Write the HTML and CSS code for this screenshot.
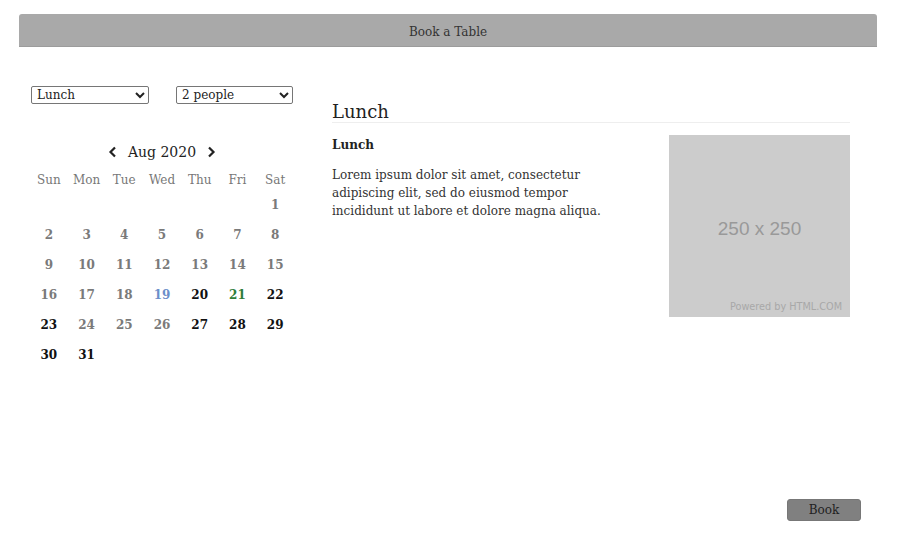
FILE: index.html
```html
<!DOCTYPE html>
<html>
<head>
<meta charset="utf-8">
<link rel="stylesheet" href="styles.css">
</head>
<body>
<div class="page">
  <div class="topbar">Book a Table</div>
  <div class="main">
    <div class="left">
      <div class="selects">
        <select class="sel sel-meal"><option>Lunch</option><option>Dinner</option></select>
        <select class="sel sel-people"><option>2 people</option><option>3 people</option></select>
      </div>
      <div class="calendar">
        <div class="cal-title">
          <span class="arrow"><svg width="10" height="12" viewBox="0 0 10 12"><path d="M7 1.5 L2.5 6 L7 10.5" fill="none" stroke="#222" stroke-width="2.2"/></svg></span>
          <span class="month">Aug 2020</span>
          <span class="arrow"><svg width="10" height="12" viewBox="0 0 10 12"><path d="M3 1.5 L7.5 6 L3 10.5" fill="none" stroke="#222" stroke-width="2.2"/></svg></span>
        </div>
        <div class="weekdays">
          <span>Sun</span><span>Mon</span><span>Tue</span><span>Wed</span><span>Thu</span><span>Fri</span><span>Sat</span>
        </div>
        <div class="days">
          <span></span><span></span><span></span><span></span><span></span><span></span><span class="past">1</span>
          <span class="past">2</span><span class="past">3</span><span class="past">4</span><span class="past">5</span><span class="past">6</span><span class="past">7</span><span class="past">8</span>
          <span class="past">9</span><span class="past">10</span><span class="past">11</span><span class="past">12</span><span class="past">13</span><span class="past">14</span><span class="past">15</span>
          <span class="past">16</span><span class="past">17</span><span class="past">18</span><span class="today">19</span><span class="open">20</span><span class="selected">21</span><span class="open">22</span>
          <span class="open">23</span><span class="past">24</span><span class="past">25</span><span class="past">26</span><span class="open">27</span><span class="open">28</span><span class="open">29</span>
          <span class="open">30</span><span class="open">31</span>
        </div>
      </div>
    </div>
    <div class="right">
      <h2 class="heading">Lunch</h2>
      <div class="detail">
        <div class="text">
          <div class="subhead">Lunch</div>
          <p class="desc">Lorem ipsum dolor sit amet, consectetur adipiscing elit, sed do eiusmod tempor incididunt ut labore et dolore magna aliqua.</p>
        </div>
        <div class="placeholder">
          <span class="ph-size">250 x 250</span>
          <span class="ph-credit">Powered by HTML.COM</span>
        </div>
      </div>
    </div>
  </div>
  <div class="footer">
    <button class="book">Book</button>
  </div>
</div>
</body>
</html>
```

FILE: styles.css
```css
* { box-sizing: border-box; }
body {
  margin: 0;
  background: #fff;
  font-family: "DejaVu Serif", "Liberation Serif", serif;
  color: #333;
}
.page {
  padding: 14px 23px 0 19px;
}
.topbar {
  height: 33px;
  background: #a9a9a9;
  border-radius: 3px 3px 0 0;
  border-bottom: 1px solid #9c9c9c;
  text-align: center;
  padding-top: 3px;
  line-height: 30px;
  font-size: 12px;
  color: #333;
}
.main {
  display: flex;
  margin-top: 39px;
  padding: 0 27px 0 11px;
}
.left {
  width: 264px;
}
.selects {
  display: flex;
  gap: 27px;
  padding-left: 1px;
}
.sel {
  height: 18px;
  font-family: "DejaVu Serif", "Liberation Serif", serif;
  font-size: 12px;
  color: #222;
  border: 1px solid #767676;
  border-radius: 2px;
  background: #fff;
  padding: 0 1px;
}
.sel-meal { width: 118px; }
.sel-people { width: 117px; }
.calendar {
  margin-top: 36px;
}
.cal-title {
  height: 24px;
  display: flex;
  align-items: center;
  justify-content: center;
  gap: 10px;
  margin-bottom: 6px;
}
.arrow { display: flex; }
.month {
  font-size: 14px;
  color: #222;
}
.weekdays, .days {
  display: grid;
  grid-template-columns: repeat(7, 1fr);
  text-align: center;
}
.weekdays span {
  height: 20px;
  line-height: 20px;
  font-size: 12px;
  color: #777;
}
.days span {
  height: 30px;
  line-height: 30px;
  font-size: 12px;
  font-weight: bold;
}
.days .past { color: #7a7a7a; }
.days .open { color: #111; }
.days .today { color: #6b8fca; }
.days .selected { color: #2f7d3a; }
.right {
  margin-left: auto;
  width: 518px;
}
.heading {
  margin: 15px 0 0;
  font-size: 18px;
  font-weight: normal;
  line-height: 21px;
  color: #222;
  border-bottom: 1px solid #eee;
}
.detail {
  display: flex;
  margin-top: 12px;
}
.text {
  width: 272px;
}
.subhead {
  font-size: 12px;
  font-weight: bold;
  line-height: 18px;
  color: #222;
  margin-top: 1px;
}
.desc {
  margin: 12px 0 0;
  font-size: 12px;
  line-height: 18px;
  color: #333;
}
.placeholder {
  margin-left: auto;
  width: 181px;
  height: 182px;
  background: #cccccc;
  position: relative;
  display: flex;
  align-items: center;
  justify-content: center;
}
.ph-size {
  font-family: "Liberation Sans", Arial, sans-serif;
  font-size: 19px;
  color: #999;
  margin-top: 6px;
}
.ph-credit {
  position: absolute;
  right: 8px;
  bottom: 5px;
  font-family: "DejaVu Sans", sans-serif;
  font-size: 9.7px;
  color: #a8a8a8;
}
.footer {
  display: flex;
  justify-content: flex-end;
  padding-right: 16px;
  margin-top: 129px;
}
.book {
  width: 74px;
  height: 22px;
  background: #808080;
  border: 1px solid #777;
  border-radius: 3px;
  font-family: "DejaVu Serif", "Liberation Serif", serif;
  font-size: 12px;
  color: #222;
  padding: 0;
}
```
